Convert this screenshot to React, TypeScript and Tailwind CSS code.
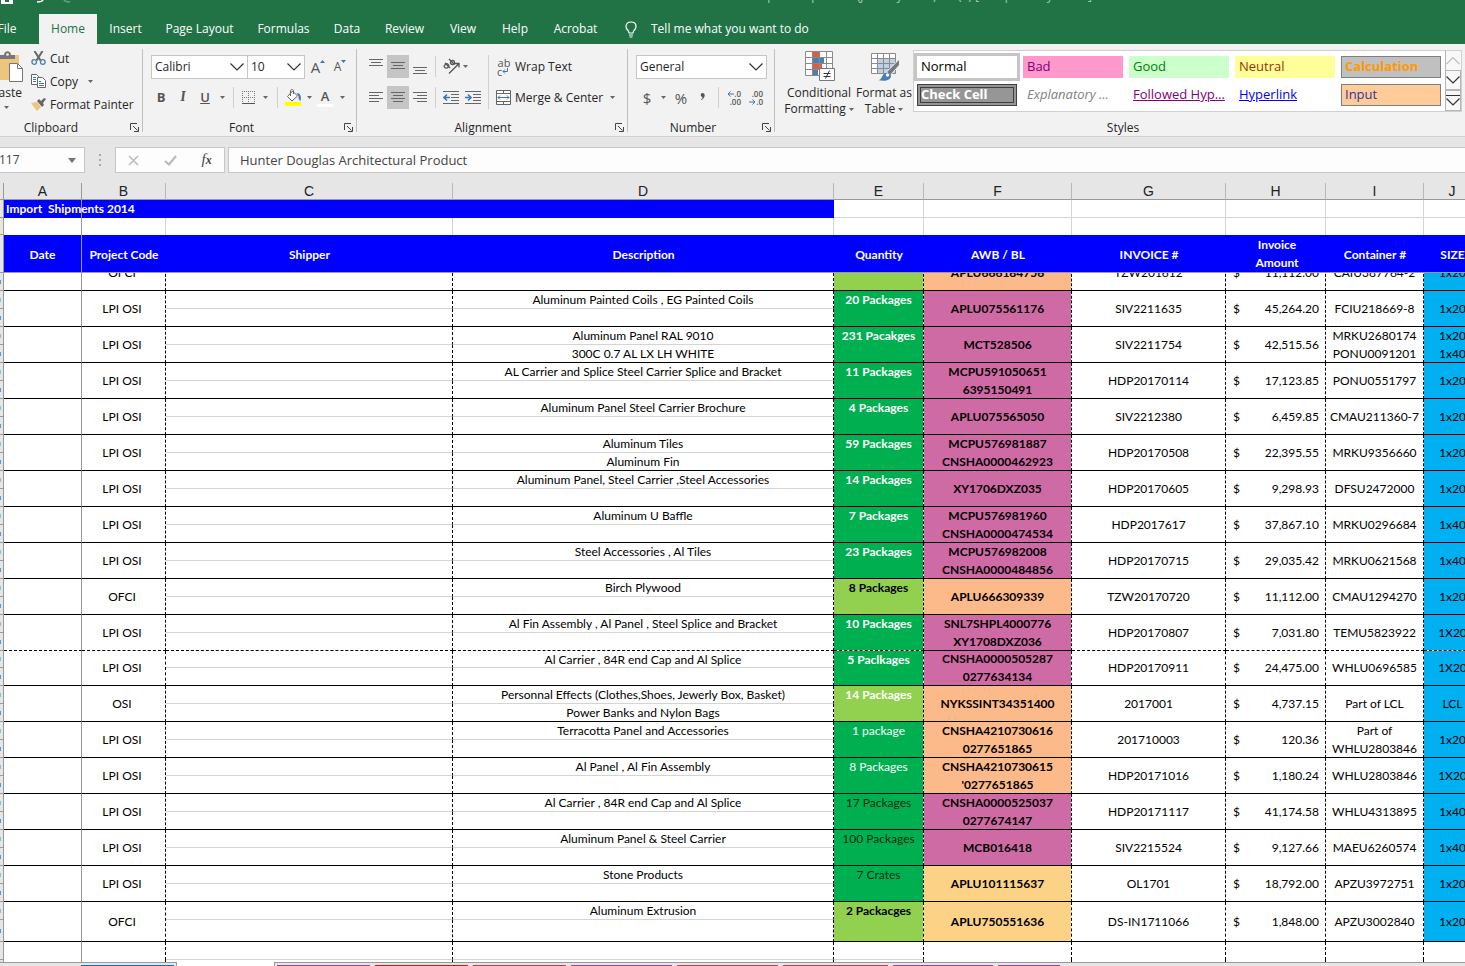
import type { ReactNode } from "react";
import clsx from "clsx";

const tabs = [
  { name: "Insert", width: "w-[57px]" },
  { name: "Page Layout", width: "w-[91px]" },
  { name: "Formulas", width: "w-[77px]" },
  { name: "Data", width: "w-[50px]" },
  { name: "Review", width: "w-[65px]" },
  { name: "View", width: "w-[52px]" },
  { name: "Help", width: "w-[52px]" },
  { name: "Acrobat", width: "w-[69px]" },
];

const GREEN = "bg-[#00b050] text-white";
const GREEN_DARK_TEXT = "bg-[#00b050] text-black/80";
const LIME = "bg-[#92d050] text-black";
const LIME_WHITE = "bg-[#92d050] text-white";
const PINK = "bg-[#cf6ba4]";
const ORANGE = "bg-[#fcb989]";
const YELLOW = "bg-[#fcd287]";

type Shipment = {
  code: string;
  desc: string[];
  qty: string;
  qtyStyle: string;
  light?: boolean;
  awb: string[];
  awbStyle: string;
  invoice: string;
  amount: string;
  container: string[];
  size: string[];
  kind?: "short" | "tall" | "dashed";
};

const shipments: Shipment[] = [
  { code: "OFCI", desc: [], qty: "", qtyStyle: LIME, awb: ["APLU666184756"], awbStyle: ORANGE, invoice: "TZW201612", amount: "11,112.00", container: ["CAIU387764-2"], size: ["1x20"] },
  { code: "LPI OSI", desc: ["Aluminum Painted Coils , EG Painted Coils"], qty: "20 Packages", qtyStyle: GREEN, awb: ["APLU075561176"], awbStyle: PINK, invoice: "SIV2211635", amount: "45,264.20", container: ["FCIU218669-8"], size: ["1x20"] },
  { code: "LPI OSI", desc: ["Aluminum Panel RAL 9010", "300C 0.7 AL LX LH WHITE"], qty: "231 Pacakges", qtyStyle: GREEN, awb: ["MCT528506"], awbStyle: PINK, invoice: "SIV2211754", amount: "42,515.56", container: ["MRKU2680174", "PONU0091201"], size: ["1x20", "1x40"] },
  { code: "LPI OSI", desc: ["AL Carrier and Splice Steel Carrier Splice and Bracket"], qty: "11 Packages", qtyStyle: GREEN, awb: ["MCPU591050651", "6395150491"], awbStyle: PINK, invoice: "HDP20170114", amount: "17,123.85", container: ["PONU0551797"], size: ["1x20"] },
  { code: "LPI OSI", desc: ["Aluminum Panel Steel Carrier Brochure"], qty: "4 Packages", qtyStyle: GREEN, awb: ["APLU075565050"], awbStyle: PINK, invoice: "SIV2212380", amount: "6,459.85", container: ["CMAU211360-7"], size: ["1x20"] },
  { code: "LPI OSI", desc: ["Aluminum Tiles", "Aluminum Fin"], qty: "59 Packages", qtyStyle: GREEN, awb: ["MCPU576981887", "CNSHA0000462923"], awbStyle: PINK, invoice: "HDP20170508", amount: "22,395.55", container: ["MRKU9356660"], size: ["1x20"] },
  { code: "LPI OSI", desc: ["Aluminum Panel, Steel Carrier ,Steel Accessories"], qty: "14 Packages", qtyStyle: GREEN, awb: ["XY1706DXZ035"], awbStyle: PINK, invoice: "HDP20170605", amount: "9,298.93", container: ["DFSU2472000"], size: ["1x20"] },
  { code: "LPI OSI", desc: ["Aluminum U Baffle"], qty: "7 Packages", qtyStyle: GREEN, awb: ["MCPU576981960", "CNSHA0000474534"], awbStyle: PINK, invoice: "HDP2017617", amount: "37,867.10", container: ["MRKU0296684"], size: ["1x40"] },
  { code: "LPI OSI", desc: ["Steel Accessories , Al Tiles"], qty: "23 Packages", qtyStyle: GREEN, awb: ["MCPU576982008", "CNSHA0000484856"], awbStyle: PINK, invoice: "HDP20170715", amount: "29,035.42", container: ["MRKU0621568"], size: ["1x40"] },
  { code: "OFCI", desc: ["Birch Plywood"], qty: "8 Packages", qtyStyle: LIME, awb: ["APLU666309339"], awbStyle: ORANGE, invoice: "TZW20170720", amount: "11,112.00", container: ["CMAU1294270"], size: ["1x20"] },
  { code: "LPI OSI", desc: ["Al Fin Assembly , Al Panel , Steel Splice and Bracket"], qty: "10 Packages", qtyStyle: GREEN, awb: ["SNL7SHPL4000776", "XY1708DXZ036"], awbStyle: PINK, invoice: "HDP20170807", amount: "7,031.80", container: ["TEMU5823922"], size: ["1X20"], kind: "dashed" },
  { code: "LPI OSI", desc: ["Al Carrier , 84R end Cap and Al Splice"], qty: "5 Paclkages", qtyStyle: GREEN, awb: ["CNSHA0000505287", "0277634134"], awbStyle: PINK, invoice: "HDP20170911", amount: "24,475.00", container: ["WHLU0696585"], size: ["1X20"], kind: "short" },
  { code: "OSI", desc: ["Personnal Effects (Clothes,Shoes, Jewerly Box, Basket)", "Power Banks and Nylon Bags"], qty: "14 Packages", qtyStyle: LIME_WHITE, awb: ["NYKSSINT34351400"], awbStyle: ORANGE, invoice: "2017001", amount: "4,737.15", container: ["Part of LCL"], size: ["LCL"] },
  { code: "LPI OSI", desc: ["Terracotta Panel and Accessories"], qty: "1 package", qtyStyle: GREEN, light: true, awb: ["CNSHA4210730616", "0277651865"], awbStyle: ORANGE, invoice: "201710003", amount: "120.36", container: ["Part of", "WHLU2803846"], size: ["1x20"] },
  { code: "LPI OSI", desc: ["Al Panel , Al Fin Assembly"], qty: "8 Packages", qtyStyle: GREEN, light: true, awb: ["CNSHA4210730615", "'0277651865"], awbStyle: ORANGE, invoice: "HDP20171016", amount: "1,180.24", container: ["WHLU2803846"], size: ["1X20"] },
  { code: "LPI OSI", desc: ["Al Carrier , 84R end Cap and Al Splice"], qty: "17 Packages", qtyStyle: GREEN_DARK_TEXT, light: true, awb: ["CNSHA0000525037", "0277674147"], awbStyle: PINK, invoice: "HDP20171117", amount: "41,174.58", container: ["WHLU4313895"], size: ["1x40"] },
  { code: "LPI OSI", desc: ["Aluminum Panel & Steel Carrier"], qty: "100 Packages", qtyStyle: GREEN_DARK_TEXT, light: true, awb: ["MCB016418"], awbStyle: PINK, invoice: "SIV2215524", amount: "9,127.66", container: ["MAEU6260574"], size: ["1x40"] },
  { code: "LPI OSI", desc: ["Stone Products"], qty: "7 Crates", qtyStyle: GREEN_DARK_TEXT, light: true, awb: ["APLU101115637"], awbStyle: YELLOW, invoice: "OL1701", amount: "18,792.00", container: ["APZU3972751"], size: ["1x20"] },
  { code: "OFCI", desc: ["Aluminum Extrusion"], qty: "2 Packacges", qtyStyle: LIME, awb: ["APLU750551636"], awbStyle: YELLOW, invoice: "DS-IN1711066", amount: "1,848.00", container: ["APZU3002840"], size: ["1x20"], kind: "tall" },
];

function Caret({ className }: { className?: string }) {
  return (
    <svg className={clsx("shrink-0", className)} width="5" height="3" viewBox="0 0 5 3">
      <path d="M0 0h5L2.5 3z" fill="#666" />
    </svg>
  );
}

function Chevron({ color = "#333" }: { color?: string }) {
  return (
    <svg className="shrink-0" width="14" height="8" viewBox="0 0 14 8" fill="none" stroke={color} strokeWidth="1.2">
      <path d="M.5.5 7 7 13.5.5" />
    </svg>
  );
}

function Group({ label, labelClass = "pr-1", launcher = true, className, children }: { label: string; labelClass?: string; launcher?: boolean; className: string; children: ReactNode }) {
  return (
    <section aria-label={label} className={clsx("flex shrink-0 flex-col", className)}>
      <div className="h-[72px] shrink-0">{children}</div>
      <div className="flex h-[13px] shrink-0 items-center leading-[13px]">
        <span className={clsx("flex-1 text-center", labelClass)}>{label}</span>
        {launcher && (
          <button aria-label={`${label} settings`} className="mr-[3px]">
            <svg width="9" height="9" viewBox="0 0 9 9" fill="none" stroke="#444">
              <path d="M.5 7V.5H7M3 3l4.5 4.5M8.5 4v4.5H4" />
            </svg>
          </button>
        )}
      </div>
    </section>
  );
}

function Combo({ label, value, className }: { label: string; value: string; className: string }) {
  return (
    <div className={clsx("flex h-6 items-center border border-[#c6c6c6] bg-white pr-[3px] pl-[3px]", className)}>
      <select aria-label={label} defaultValue={value} className="w-0 flex-1 appearance-none bg-transparent outline-none">
        <option>{value}</option>
      </select>
      <Chevron />
    </div>
  );
}

function Lines({ rows, className }: { rows: [number, number][]; className?: string }) {
  return (
    <svg className={className} width="14" height="14" viewBox="0 0 14 14" stroke="#666">
      {rows.map(([x, w], i) => (
        <path key={i} d={`M${x} ${i * 3 + 1.5}h${w}`} />
      ))}
    </svg>
  );
}

function IconButton({ label, active, className, children }: { label: string; active?: boolean; className?: string; children: ReactNode }) {
  return (
    <button aria-label={label} className={clsx("flex h-[23px] items-center justify-center", active && "bg-[#c5c5c5]", className)}>
      {children}
    </button>
  );
}

function Separator({ className = "h-[21px]" }: { className?: string }) {
  return <span className={clsx("w-px shrink-0 bg-[#d0d0d0]", className)} />;
}

function Clipboard() {
  return (
    <Group label="Clipboard" labelClass="pr-7" className="w-[143px] border-r border-[#c0c0c0]">
      <div className="flex h-full gap-[6px]">
        <button className="flex w-[25px] flex-col items-end overflow-hidden pt-[2px]">
          <svg className="mr-[2px] shrink-0" width="27" height="32" viewBox="0 0 27 32">
            <path d="M0 4h23v25H0z" fill="#edc57c" />
            <path d="M4 8V4h4c0-5 7-5 7 0h4v4z" fill="#777" />
            <circle cx="11.500" cy="3.500" r="1.300" fill="#f2f2f2" />
            <path d="M13.500 12.500h8l5 5v13h-13z" fill="#fff" stroke="#777" />
            <path d="M21.500 12.500v5h5" fill="none" stroke="#777" />
          </svg>
          <span className="mr-[3px] leading-5">Paste</span>
          <Caret className="mt-[3px] mr-[16px]" />
        </button>
        <div className="flex flex-col pt-[2px]">
          <button className="flex h-[23px] items-start">
            <svg className="mr-[4px]" width="15" height="16" viewBox="0 0 15 16" fill="none">
              <path d="M3.500 0l6 9.500M11.500 0l-6 9.500" stroke="#666" strokeWidth="2" />
              <circle cx="3.200" cy="11" r="2.300" stroke="#4a7fb5" strokeWidth="1.300" />
              <circle cx="11.800" cy="11" r="2.300" stroke="#4a7fb5" strokeWidth="1.300" />
            </svg>
            Cut
          </button>
          <button className="flex h-[23px] items-start">
            <svg className="mr-[4px]" width="15" height="15" viewBox="0 0 15 15" fill="#fff" stroke="#666">
              <path d="M.5.5h5l2 2v8h-7z" />
              <path d="M6.500 3.500h5l3 3v7h-8z" />
              <path d="M2 3.500h3M2 5.500h3M2 7.500h3M8 7.500h2M8 9.500h5M8 11.500h5" stroke="#3f75b0" />
            </svg>
            Copy
            <Caret className="mt-[6px] ml-[10px]" />
          </button>
          <button className="flex items-start whitespace-nowrap">
            <svg className="mr-[4px]" width="15" height="15" viewBox="0 0 15 15">
              <path d="M0 6l6-1 4 5-4 4z" fill="#edc57c" />
              <path d="M6 4l2-2 2 2 3-3 2 1-3 4 1 2-2 2z" fill="#666" />
            </svg>
            Format Painter
          </button>
        </div>
      </div>
    </Group>
  );
}

function FontGroup() {
  return (
    <Group label="Font" className="w-[214px] border-r border-[#c0c0c0]">
      <div className="flex pt-[6px] pl-2">
        <Combo label="Font family" value="Calibri" className="w-[97px]" />
        <Combo label="Font size" value="10" className="w-[57px] border-l-0" />
        <IconButton label="Grow font" className="ml-[5px] w-4 text-[15px] text-[#555]">
          A<svg className="mb-[10px]" width="5" height="3"><path d="M0 3h5L2.500 0z" fill="#3f75b0" /></svg>
        </IconButton>
        <IconButton label="Shrink font" className="ml-[6px] w-4 text-[12px] text-[#555]">
          A<svg className="mb-[10px]" width="5" height="3"><path d="M0 0h5L2.500 3z" fill="#3f75b0" /></svg>
        </IconButton>
      </div>
      <div className="flex items-center pt-[7px] pl-[7px] text-[#555]">
        <IconButton label="Bold" className="w-[22px] text-[13px] font-bold">B</IconButton>
        <IconButton label="Italic" className="w-[22px] font-serif text-[14px] font-bold italic">I</IconButton>
        <IconButton label="Underline" className="w-[22px] text-[13px] font-semibold underline">U</IconButton>
        <Caret className="ml-[4px]" />
        <Separator className="ml-[8px] h-[21px]" />
        <IconButton label="Borders" className="ml-[8px]">
          <svg width="14" height="14" viewBox="0 0 14 14" fill="none" stroke="#777" strokeDasharray="1 1">
            <path d="M0 .5h13M.5 0v13M6.500 0v13M12.500 0v13M0 6.500h13" />
            <path d="M0 12.500h13" stroke="#555" strokeDasharray="none" />
          </svg>
        </IconButton>
        <Caret className="ml-[7px]" />
        <Separator className="ml-[9px] h-[21px]" />
        <IconButton label="Fill color" className="ml-[7px]">
          <svg width="17" height="17" viewBox="0 0 17 17" fill="none">
            <path d="M7.500 2L2.500 7.500l4.500 4.500 5.500-5z" fill="#fff" stroke="#666" />
            <path d="M5.500 7V2c0-2 3-2 3 0v3" stroke="#666" />
            <path d="M11.500 4c4 0 5 3 4 8-2-1-2-3-2-5z" fill="#3f75b0" />
            <path d="M0 13h16v4H0z" fill="#ff0" />
          </svg>
        </IconButton>
        <Caret className="ml-[5px]" />
        <IconButton label="Font color" className="ml-[5px] w-4 flex-col text-[13px] font-semibold">
          <span className="leading-[15px]">A</span>
          <span className="h-[3px] w-4 bg-white" />
        </IconButton>
        <Caret className="ml-[7px]" />
      </div>
    </Group>
  );
}

function Alignment() {
  return (
    <Group label="Alignment" labelClass="pr-[6px]" className="w-[271px] border-r border-[#c0c0c0]">
      <div className="flex pt-[6px] pl-2">
        <div>
          <div className="flex items-center">
            <IconButton label="Top align" className="w-[22px]"><Lines rows={[[0, 14], [2, 10], [0, 14]]} className="mb-1" /></IconButton>
            <IconButton label="Middle align" active className="w-[22px]"><Lines rows={[[0, 14], [2, 10], [0, 14]]} className="mt-[3px]" /></IconButton>
            <IconButton label="Bottom align" className="w-[22px]"><Lines rows={[[0, 14], [2, 10], [0, 14]]} className="mt-3" /></IconButton>
            <Separator className="ml-[4px] h-[21px]" />
            <IconButton label="Orientation" className="ml-[7px]">
              <svg width="18" height="17" viewBox="0 0 18 17" fill="none" stroke="#555" strokeWidth="1.300">
                <ellipse cx="3.500" cy="8" rx="2.300" ry="2" transform="rotate(-45 3.500 8)" />
                <path d="M2 5l5 5M6 1l5.500 5.500" />
                <circle cx="9.500" cy="4.500" r="2" />
                <path d="M6 15.500L15.500 6M12 5.500H16v4" />
              </svg>
            </IconButton>
            <Caret className="ml-[2px]" />
          </div>
          <div className="flex items-center pt-2">
            <IconButton label="Align left" className="w-[22px]"><Lines rows={[[0, 14], [0, 10], [0, 14], [0, 10]]} /></IconButton>
            <IconButton label="Center" active className="w-[22px]"><Lines rows={[[0, 14], [2, 10], [0, 14], [2, 10]]} /></IconButton>
            <IconButton label="Align right" className="w-[22px]"><Lines rows={[[0, 14], [4, 10], [0, 14], [4, 10]]} /></IconButton>
            <Separator className="ml-[4px] h-[21px]" />
            <IconButton label="Decrease indent" className="ml-[7px]">
              <svg width="16" height="14" viewBox="0 0 16 14" fill="none" stroke="#666">
                <path d="M0 .5h16M8 3.500h8M8 6.500h8M8 9.500h8M0 12.500h16" />
                <path d="M1 6.500h6M4 3.500l-3 3 3 3" stroke="#3f75b0" strokeWidth="1.600" />
              </svg>
            </IconButton>
            <IconButton label="Increase indent" className="ml-[6px]">
              <svg width="16" height="14" viewBox="0 0 16 14" fill="none" stroke="#666">
                <path d="M0 .5h16M8 3.500h8M8 6.500h8M8 9.500h8M0 12.500h16" />
                <path d="M0 6.500h6M3 3.500l3 3-3 3" stroke="#3f75b0" strokeWidth="1.600" />
              </svg>
            </IconButton>
          </div>
        </div>
        <Separator className="ml-[7px] h-[54px]" />
        <div className="ml-[7px]">
          <button className="flex h-[23px] items-center gap-1">
            <span className="flex w-[15px] flex-col pl-px text-[11px] leading-[9px] text-[#555]">
              <span>ab</span>
              <span className="flex items-center">
                c
                <svg width="6" height="6" viewBox="0 0 6 6" fill="none" stroke="#3f75b0"><path d="M5.500 0v3.500H1M3 1.500l-2 2 2 2" /></svg>
              </span>
            </span>
            Wrap Text
          </button>
          <button className="mt-2 flex h-[23px] items-center gap-1 whitespace-nowrap">
            <svg width="15" height="15" viewBox="0 0 15 15" fill="#fff" stroke="#666">
              <path d="M.5.5h14v14H.5zM.5 3.500h14M.5 11.500h14M7.500.5v3M7.500 11.500v3" />
              <path d="M2 7.500h11M4 5.500l-2 2 2 2M11 5.500l2 2-2 2" fill="none" stroke="#3f75b0" />
            </svg>
            Merge &amp; Center
            <Caret className="ml-[3px]" />
          </button>
        </div>
      </div>
    </Group>
  );
}

function NumberGroup() {
  return (
    <Group label="Number" className="w-[147px] border-r border-[#c0c0c0]">
      <div className="pt-[6px] pl-2">
        <Combo label="Number format" value="General" className="w-[131px]" />
      </div>
      <div className="flex items-center pt-[7px] pl-2 text-[15px] text-[#555]">
        <IconButton label="Currency" className="w-[22px]">$</IconButton>
        <Caret className="ml-[3px]" />
        <IconButton label="Percent" className="ml-[6px] w-[18px]">%</IconButton>
        <IconButton label="Comma" className="ml-[3px] w-[18px]">
          <svg className="mb-[3px]" width="5" height="7" viewBox="0 0 6 9"><path d="M3 0c4 0 4 6-1.500 9L1 8c2-1 2-2 2-3C0 5 0 0 3 0z" fill="#555" /></svg>
        </IconButton>
        <Separator className="ml-[7px] h-[21px]" />
        <button aria-label="Increase decimal" className="ml-[7px] flex w-[15px] flex-col items-end text-[8px] leading-[8px] font-semibold">
          <span className="flex items-center">
            <svg width="7" height="6" viewBox="0 0 7 6" fill="none" stroke="#3f75b0"><path d="M1 3h6M3.500.5L1 3l2.500 2.500" /></svg>.0
          </span>
          <span>.00</span>
        </button>
        <button aria-label="Decrease decimal" className="ml-[7px] flex w-[15px] flex-col items-end text-[8px] leading-[8px] font-semibold">
          <span>.00</span>
          <span className="flex items-center">
            <svg width="7" height="6" viewBox="0 0 7 6" fill="none" stroke="#3f75b0"><path d="M0 3h6M3.500.5L6 3 3.500 5.500" /></svg>.0
          </span>
        </button>
      </div>
    </Group>
  );
}

const cellStyles = [
  { name: "Normal", className: "pl-[4px] bg-white text-black outline-3 outline-[#c5c5c5]" },
  { name: "Bad", className: "pl-[4px] bg-[#ff99cc] text-[#800080]" },
  { name: "Good", className: "pl-[4px] bg-[#ccffcc] text-[#008000]" },
  { name: "Neutral", className: "pl-[4px] bg-[#ffff99] text-[#993300]" },
  { name: "Calculation", className: "pl-[3px] border border-[#7f7f7f] bg-[#c0c0c0] font-bold text-[#ff9900]" },
  { name: "Check Cell", className: "border-4 border-double border-[#3f3f3f] bg-[#969696] font-bold text-white" },
  { name: "Explanatory ...", className: "pl-[4px] text-[#808080] italic" },
  { name: "Followed Hyp...", className: "pl-[4px] text-[#800080] underline" },
  { name: "Hyperlink", className: "pl-[4px] text-[#0000ff] underline" },
  { name: "Input", className: "pl-[3px] border border-[#7f7f7f] bg-[#ffcc99] text-[#333399]" },
];

function Styles() {
  return (
    <Group label="Styles" labelClass="pl-[6px]" launcher={false} className="min-w-0 flex-1">
      <div className="flex h-full">
        <button className="ml-[10px] flex w-[68px] flex-col items-center pt-[2px] leading-4">
          <svg className="mb-[3px] ml-px shrink-0" width="30" height="31" viewBox="0 0 30 31" stroke="#8a8a8a">
            <path d="M.5.5h27v24H.5z" fill="#fff" />
            <path d="M8 1h6v5H8zM8 13h9v5H8z" fill="#d9603b" stroke="none" />
            <path d="M8 7h11v5H8zM8 19h5v5H8z" fill="#4a7fb5" stroke="none" />
            <path d="M.5 6.500h27M.5 12.500h27M.5 18.500h27M7.500.5v24M14.500.5v24M21.500.5v24" fill="none" />
            <path d="M14.500 17.500h15v12h-15z" fill="#fff" stroke="#777" />
            <path d="M18.500 22.500h7M18.500 25.500h7M24.500 19.500l-4 8" stroke="#333" />
          </svg>
          Conditional
          <span className="flex items-center gap-[3px]">Formatting <Caret /></span>
        </button>
        <button className="ml-[4px] flex w-[54px] flex-col items-center pt-[2px] leading-4 whitespace-nowrap">
          <svg className="mb-[3px] ml-[3px] shrink-0" width="30" height="31" viewBox="0 0 30 31" fill="none" stroke="#8a8a8a">
            <path d="M.5 2.500h24v20H.5z" fill="#fff" />
            <path d="M6.500 7.500h18v15h-18z" fill="#bcd0e8" />
            <path d="M.5 7.500h24M.5 12.500h24M.5 17.500h24M6.500 2.500v20M12.500 2.500v20M18.500 2.500v20" />
            <path d="M28.500 8v6l-9 10-4-3z" fill="#777" stroke="#f2f2f2" />
            <path d="M7 29c3 0 3-2 5-5 2-3 8-3 8 1s-6 6-13 4z" fill="#4a7fb5" stroke="none" />
            <circle cx="16.500" cy="24" r="1.700" fill="#fff" stroke="none" />
          </svg>
          Format as
          <span className="flex items-center gap-[3px]">Table <Caret /></span>
        </button>
        <div className="mt-px ml-[2px] flex h-[62px] shrink-0 border border-[#d0d0d0] bg-white">
          <div className="grid grid-cols-5 gap-[6px] py-[5px] pr-[4px] pl-[3px] text-[13px]">
            {cellStyles.map((s) => (
              <button key={s.name} className={clsx("flex h-[22px] w-[100px] items-center overflow-hidden whitespace-nowrap", s.className)}>
                {s.name}
              </button>
            ))}
          </div>
          <div className="flex w-4 flex-col bg-[#f8f8f8]">
            <button aria-label="Scroll up" className="flex flex-1 rotate-180 items-center justify-center border-r border-[#b5b5b5]"><Chevron color="#bbb" /></button>
            <button aria-label="Scroll down" className="flex flex-1 items-center justify-center border border-[#b5b5b5]"><Chevron /></button>
            <button aria-label="More styles" className="flex flex-1 flex-col items-center justify-center gap-[2px] border border-[#b5b5b5]">
              <span className="h-px w-[14px] bg-[#333]" />
              <Chevron />
            </button>
          </div>
        </div>
      </div>
    </Group>
  );
}

function Columns() {
  return (
    <colgroup>
      <col className="w-[4px]" />
      <col className="w-[78px]" />
      <col className="w-[84px]" />
      <col />
      <col className="w-[381px]" />
      <col className="w-[90px]" />
      <col className="w-[148px]" />
      <col className="w-[154px]" />
      <col className="w-[100px]" />
      <col className="w-[98px]" />
      <col className="w-[57px]" />
    </colgroup>
  );
}

const tableClass = "w-[calc(100%+16px)] table-fixed border-separate border-spacing-0 text-center";

function FrozenPane() {
  const letters = ["A", "B", "C", "D", "E", "F", "G", "H", "I", "J"];
  const heads = ["Date", "Project Code", "Shipper", "Description", "Quantity", "AWB / BL", "INVOICE #", "Invoice Amount", "Container #", "SIZE"];
  return (
    <table className={clsx(tableClass, "shrink-0")}>
      <Columns />
      <thead>
        <tr className="h-[17px] bg-[#e6e6e6] font-['Liberation_Sans',sans-serif] text-[14px] leading-4 text-[#222]">
          <td className="border-r border-b border-[#999]" />
          {letters.map((l) => (
            <th key={l} scope="col" className={clsx("border-r border-b border-b-[#999] p-0 font-normal", l === "A" ? "border-r-[#999]" : "border-r-[#b8b8b8]")}>{l}</th>
          ))}
        </tr>
      </thead>
      <tbody>
        <tr className="h-[18px] text-white">
          <td className="border-r border-b border-[#999] bg-[#e6e6e6]" />
          <td className="border-r border-[#999] bg-[#0000ff] p-0 pl-[2px] text-left leading-[18px] font-bold whitespace-pre">Import  Shipments 2014</td>
          <td colSpan={3} className="bg-[#0000ff]" />
          {letters.slice(4).map((l) => <td key={l} className="border-r border-b border-[#d4d4d4]" />)}
        </tr>
        <tr className="h-[17px]">
          <td className="border-r border-b border-[#999] bg-[#e6e6e6]" />
          {letters.map((l) => <td key={l} className={clsx("border-r", l === "A" ? "border-[#999]" : "border-[#d4d4d4]")} />)}
        </tr>
        <tr className="h-[38px] bg-[#0000ff] text-white">
          <td className="border-r border-b border-[#999] bg-[#e6e6e6]" />
          {heads.map((h) => (
            <th key={h} scope="col" className={clsx("border-b border-[#999] p-0 leading-[18px] font-bold", h === "Date" && "border-r", h === "Invoice Amount" ? "pr-4 pl-[18px]" : "pt-[2px]")}>{h}</th>
          ))}
        </tr>
      </tbody>
    </table>
  );
}

function ShipmentRows({ s }: { s: Shipment }) {
  const tall = s.kind === "tall";
  const box = clsx("flex flex-col justify-center leading-[18px]", s.kind === "short" ? "h-[34px]" : tall ? "h-[39px]" : "h-[35px]");
  const solid = "border-b border-b-black p-0 bg-clip-padding";
  const cell = clsx("border-b border-b-black p-0 bg-clip-padding", s.kind === "dashed" && "[border-bottom-style:dashed]");
  const dash = "border-r border-r-black [border-right-style:dashed]";
  const half = s.kind === "short" ? "h-4" : "h-[17px]";
  const rowHead = "border-r border-b border-[#999] bg-[#e6e6e6] p-0";
  return (
    <>
      <tr>
        <td className={rowHead}><div className="h-1 w-px bg-[#7cc4ea]" /></td>
        <td rowSpan={2} className={clsx(cell, "border-r border-r-[#999]")} />
        <td rowSpan={2} className={clsx(cell, dash)}><div className={clsx(box, "pr-[3px]")}>{s.code}</div></td>
        <td className={clsx("border-b border-b-[#d4d4d4] p-0", dash)} />
        <td className={clsx("border-b border-b-[#d4d4d4] p-0", dash)}><div className={clsx("leading-[18px]", half)}>{s.desc[0]}</div></td>
        <td rowSpan={2} className={clsx(cell, dash, "align-top leading-[18px]", s.light ? "font-normal" : "font-bold", s.qtyStyle)}>{s.qty}</td>
        <td rowSpan={2} className={clsx(solid, dash, "font-bold", s.awbStyle)}>
          <div className={box}>{s.awb.map((a) => <span key={a}>{a}</span>)}</div>
        </td>
        <td rowSpan={2} className={clsx(cell, dash)}><div className={box}>{s.invoice}</div></td>
        <td rowSpan={2} className={clsx(cell, dash)}>
          <div className={clsx(box, "pr-[6px] pl-[7px]")}>
            <span className="flex justify-between"><span>$</span><span>{s.amount}</span></span>
          </div>
        </td>
        <td rowSpan={2} className={clsx(cell, dash)}>
          <div className={box}>{s.container.map((c) => <span key={c}>{c}</span>)}</div>
        </td>
        <td rowSpan={2} className={clsx(cell, "bg-[#00b0f0]")}>
          <div className={box}>{s.size.map((z) => <span key={z}>{z}</span>)}</div>
        </td>
      </tr>
      <tr>
        <td className={rowHead}><div className="h-1 w-px bg-[#4f9bd8]" /></td>
        <td className={clsx(cell, dash)} />
        <td className={clsx(cell, dash)}><div className={clsx("leading-[18px]", tall ? "h-[21px]" : "h-[17px]")}>{s.desc[1]}</div></td>
      </tr>
    </>
  );
}

const sheetTabs = [
  { color: "bg-[#9b3fa0]", width: "w-[93px]" },
  { color: "bg-[#e01010]", width: "w-[93px]" },
  { color: "bg-[#b0405c]", width: "w-[93px]" },
  { color: "bg-[#9b3fa0]", width: "w-[101px]" },
  { color: "bg-[#b0405c]", width: "w-[101px]" },
  { color: "bg-[#b0405c]", width: "w-[105px]" },
  { color: "bg-[#9b3fa0]", width: "w-[100px]" },
  { color: "bg-[#9b3fa0]", width: "w-[62px]" },
];

export default function App() {
  return (
    <div className="flex h-screen flex-col overflow-hidden bg-white font-['Open_Sans','Noto_Sans',sans-serif] text-xs text-[#262626]">
      {/* Title strip */}
      <header className="flex h-[14px] shrink-0 items-end overflow-hidden bg-[#217346]">
        <div className="flex h-full flex-1 items-start">
          <svg width="80" height="5" viewBox="0 0 80 5" fill="none">
            <path d="M1 0h12v4H1z" fill="#fff" />
            <path d="M5 0h4v2H5z" fill="#217346" />
            <path d="M37 2q5 0 6-2" stroke="#fff" strokeWidth="1.500" />
            <path d="M70 2q-5 0-6-2" stroke="#6aa384" strokeWidth="1.500" />
          </svg>
        </div>
        <div className="mr-[373px] h-[14px] leading-4 whitespace-nowrap text-[#a5cbb5]">
          <div className="-mt-3">Import Shipments (January 2014).xls (1) [Compatibility Mode]</div>
        </div>
      </header>

      {/* Ribbon tabs */}
      <nav className="flex h-[30px] shrink-0 items-stretch bg-[#217346] text-white">
        <button className="-ml-[3px] w-[42px] pr-[22px] text-center">File</button>
        <button className="w-[58px] bg-[#f2f2f2] text-[#217346]">Home</button>
        {tabs.map((t) => (
          <button key={t.name} className={clsx("whitespace-nowrap", t.width)}>{t.name}</button>
        ))}
        <button className="ml-[15px] flex items-center gap-[14px] whitespace-nowrap">
          <svg width="12" height="17" viewBox="0 0 12 17" fill="none" stroke="#fff" strokeWidth="1.200">
            <path d="M4 12c0-3-3-3-3-6.500C1 2.500 3 1 6 1s5 1.500 5 4.500C11 9 8 9 8 12zM4 14h4M4.500 16h3" />
          </svg>
          Tell me what you want to do
        </button>
      </nav>

      {/* Ribbon */}
      <div className="flex h-[93px] shrink-0 border-b border-[#d0d0d0] bg-[#f2f2f2] pt-[5px] pb-1">
        <Clipboard />
        <FontGroup />
        <Alignment />
        <NumberGroup />
        <Styles />
      </div>

      {/* Formula bar */}
      <div className="flex h-[46px] shrink-0 items-center bg-[#e6e6e6] text-[#444]">
        <div className="flex h-[26px] w-[85px] items-center border border-l-0 border-[#c6c6c6] bg-[#fdfdfd] pr-2">
          <input aria-label="Name box" defaultValue="117" className="-ml-px w-0 flex-1 outline-none" />
          <svg width="8" height="5" viewBox="0 0 8 5"><path d="M0 0h8L4 5z" fill="#777" /></svg>
        </div>
        <svg className="mx-[14px]" width="2" height="12" viewBox="0 0 2 12" fill="#aaa">
          <path d="M0 0h2v2H0zM0 5h2v2H0zM0 10h2v2H0z" />
        </svg>
        <div className="flex h-[26px] w-[110px] items-center justify-around border border-[#c6c6c6] bg-[#fdfdfd]">
          <button aria-label="Cancel">
            <svg width="11" height="11" viewBox="0 0 11 11" stroke="#bbb" strokeWidth="1.500"><path d="M1 1l9 9M10 1l-9 9" /></svg>
          </button>
          <button aria-label="Enter">
            <svg width="13" height="11" viewBox="0 0 13 11" fill="none" stroke="#bbb" strokeWidth="2.200"><path d="M1 6l4 3.500L12 1" /></svg>
          </button>
          <button aria-label="Insert function" className="font-['Liberation_Serif',serif] text-[15px] italic">
            f<span className="text-[12px] font-bold">x</span>
          </button>
        </div>
        <input aria-label="Formula" defaultValue="Hunter Douglas Architectural Product" className="ml-[3px] h-[26px] flex-1 border border-r-0 border-[#c6c6c6] bg-[#fdfdfd] pl-[11px] text-[13px] outline-none" />
      </div>

      {/* Worksheet */}
      <main className="flex min-h-0 flex-1 flex-col overflow-hidden font-[Lato,sans-serif] text-xs text-black">
        <FrozenPane />
        <div className="min-h-0 flex-1 overflow-hidden">
          <table className={clsx(tableClass, "-mt-[18px]")}>
            <Columns />
            <tbody>
              {shipments.map((s, i) => <ShipmentRows key={i} s={s} />)}
              {[0, 1].map((r) => (
                <tr key={r} className="h-[18px]">
                  <td className="border-r border-b border-[#999] bg-[#e6e6e6]" />
                  <td className="border-r border-[#999]" />
                  <td className="border-r border-dashed border-black" />
                  {["C", "D", "E"].map((c) => (
                    <td key={c} className="border-r border-b border-r-black border-b-[#d4d4d4] [border-right-style:dashed]" />
                  ))}
                  {["F", "G", "H", "I"].map((c) => <td key={c} className="border-r border-dashed border-black" />)}
                  <td />
                </tr>
              ))}
            </tbody>
          </table>
        </div>
      </main>

      {/* Sheet tabs */}
      <footer className="flex h-1 shrink-0 bg-white">
        <div className="flex w-[177px] items-end justify-end border-t border-r border-[#999] bg-[#e6e6e6] pr-[2px]">
          <span className="h-px w-[93px] bg-[#1070b8]" />
        </div>
        <div className="ml-[97px] flex flex-1 items-end gap-[5px] border-t border-l border-[#999] bg-[#e6e6e6] pl-[2px]">
          {sheetTabs.map((t, i) => <span key={i} className={clsx("h-px", t.color, t.width)} />)}
        </div>
      </footer>
    </div>
  );
}
